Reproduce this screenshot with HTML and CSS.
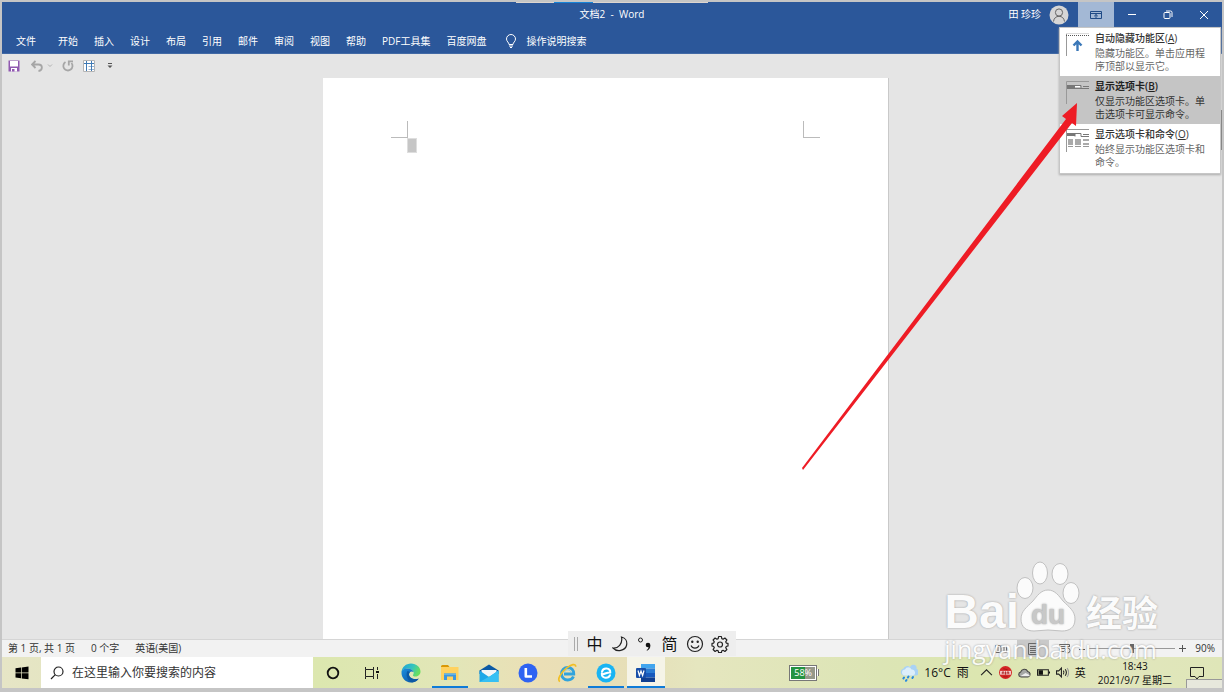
FILE: index.html
```html
<!DOCTYPE html>
<html lang="zh-CN">
<head>
    <meta charset="UTF-8">
    <meta name="viewport" content="width=device-width, initial-scale=1.0">
    <title>文档2 - Word</title>
    <link rel="stylesheet" href="styles.css">
</head>
<body>
    <div class="top-strip"></div>

    <header class="header">
        <div class="titlebar">
            <h1 class="doc-title">文档2&nbsp; -&nbsp; Word</h1>
            <div class="window-tools">
                <span class="user-name">田 珍珍</span>
                <svg class="avatar" viewBox="0 0 20 20">
                    <circle cx="10" cy="10" r="9.5" fill="#d6d6d6"/>
                    <circle cx="10" cy="7.5" r="3.6" fill="none" stroke="#666" stroke-width="1"/>
                    <path d="M4.5 16.5c.4-3.4 2.6-5.2 5.5-5.2s5.1 1.8 5.5 5.2" fill="none" stroke="#666" stroke-width="1"/>
                </svg>
                <button class="win-btn active" aria-label="功能区显示选项">
                    <svg width="12" height="10" viewBox="0 0 12 10" fill="none" stroke="#1f4a86">
                        <path d="M.5 1.5h11v7H.5zM.5 3.5h11M6 8V4.5M4.2 6.2L6 4.5l1.8 1.7"/>
                    </svg>
                </button>
                <button class="win-btn" aria-label="最小化">
                    <svg width="10" height="10" viewBox="0 0 10 10" stroke="#fff"><path d="M1 4.5h8"/></svg>
                </button>
                <button class="win-btn" aria-label="还原">
                    <svg width="10" height="10" viewBox="0 0 10 10" fill="none" stroke="#fff">
                        <rect x="1" y="2.5" width="6" height="6" rx="1"/>
                        <path d="M3 1h4.500q1.500 0 1.500 1.500V7"/>
                    </svg>
                </button>
                <button class="win-btn" aria-label="关闭">
                    <svg width="10" height="10" viewBox="0 0 10 10" stroke="#fff"><path d="M1 1l8 8M9 1L1 9"/></svg>
                </button>
            </div>
        </div>
        <nav class="tabs">
            <a class="file" href="#file">文件</a>
            <a href="#home">开始</a>
            <a href="#insert">插入</a>
            <a href="#design">设计</a>
            <a href="#layout">布局</a>
            <a href="#references">引用</a>
            <a href="#mailings">邮件</a>
            <a href="#review">审阅</a>
            <a href="#view">视图</a>
            <a href="#help">帮助</a>
            <a href="#pdf">PDF工具集</a>
            <a href="#netdisk">百度网盘</a>
            <label class="tell-me">
                <svg width="12" height="14" viewBox="0 0 12 14" fill="none" stroke="#fff">
                    <path d="M4 10.5C4 8.5 1.5 7.5 1.5 5a4.5 4.5 0 0 1 9 0c0 2.500-2.500 3.500-2.500 5.500zM4 12h4M5 13.500h2"/>
                </svg>
                <input type="text" placeholder="操作说明搜索" aria-label="操作说明搜索">
            </label>
        </nav>
    </header>

    <div class="quick-access">
        <button aria-label="保存">
            <svg width="12" height="12" viewBox="0 0 12 12">
                <path d="M.5.5h11v11H.5z" fill="#9059b0"/>
                <path d="M2 1h8v5.500H2z" fill="#fff"/>
                <path d="M3 8h6v3.500H3z" fill="#fff"/>
                <path d="M4 9h2.500v2.500H4z" fill="#9059b0"/>
            </svg>
        </button>
        <button class="undo" aria-label="撤消">
            <svg width="12" height="12" viewBox="0 0 12 12" fill="none" stroke="#a6a6a6" stroke-width="1.800">
                <path d="M4.500 1L1 4.500 4.500 8M1 4.500h6.500c4.500 0 4.500 6 0 6.500"/>
            </svg>
            <svg width="6" height="4" viewBox="0 0 6 4" fill="none" stroke="#b0b0b0"><path d="M1 .5l2 2 2-2"/></svg>
        </button>
        <button aria-label="重复">
            <svg width="12" height="12" viewBox="0 0 12 12" fill="none" stroke="#a6a6a6" stroke-width="1.800">
                <path d="M3.500 2A4.600 4.600 0 1 0 9.500 3M6.800 5.500V1.300H11"/>
            </svg>
        </button>
        <button aria-label="绘制表格">
            <svg width="12" height="12" viewBox="0 0 12 12" fill="none">
                <path d="M.5.5h11v11H.5z" fill="#fff" stroke="#b5b5b5"/>
                <path d="M5.500 6.500h6M5.500 9.500h6" stroke="#9ab4d0"/>
                <path d="M1 3.500h10M3.500 1v10M8.500 1v10" stroke="#3f7ab5"/>
            </svg>
        </button>
        <button aria-label="自定义快速访问工具栏">
            <svg width="6" height="6" viewBox="0 0 6 6"><path d="M1 0h4v1H1zM.5 2.500h5L3 5z" fill="#555"/></svg>
        </button>
    </div>

    <main class="workspace">
        <div class="page">
            <div class="crop-marks">
                <span class="mark mark-left"></span>
                <span class="mark mark-right"></span>
            </div>
            <div class="caret"></div>
        </div>
        <div class="scroll-thumb"></div>
    </main>

    <footer class="statusbar">
        <span>第 1 页, 共 1 页</span>
        <span>0 个字</span>
        <span>英语(美国)</span>
        <div class="views">
            <button aria-label="阅读视图">
                <svg width="12" height="10" viewBox="0 0 12 10" fill="none" stroke="#666"><path d="M6 1.500v8M.5 1.500h4L6 2.500l1.500-1h4v7h-4L6 9.500l-1.500-1h-4zM2 4h2M2 6h2M8 4h2M8 6h2"/></svg>
            </button>
            <button class="selected" aria-label="页面视图">
                <svg width="10" height="12" viewBox="0 0 10 12" fill="none" stroke="#666"><path d="M.5.500h9v11h-9zM2 3.500h6M2 5.500h6M2 7.500h6M2 9.500h6"/></svg>
            </button>
            <button aria-label="Web 版式视图">
                <svg width="12" height="11" viewBox="0 0 12 11" fill="none" stroke="#666"><path d="M5 8.500H.5v-7h10V4M.5 3.500h10M2 5.500h4"/><circle cx="8.500" cy="7.500" r="2.500"/></svg>
            </button>
        </div>
        <div class="zoom">
            <button aria-label="缩小"><svg width="6" height="6" viewBox="0 0 6 6" stroke="#555"><path d="M0 3.500h6"/></svg></button>
            <input type="range" min="10" max="170" value="90" aria-label="显示比例">
            <button aria-label="放大"><svg width="7" height="7" viewBox="0 0 7 7" stroke="#555"><path d="M0 3.500h7M3.500 0v7"/></svg></button>
            <span>90%</span>
        </div>
    </footer>

    <div class="taskbar">
        <button class="start" aria-label="开始菜单">
            <svg width="14" height="14" viewBox="0 0 14 14"><path d="M.5 2.300L6 1.500v5H.5zM6.700 1.400L13.500.5v6H6.700zM.5 7.300H6v5l-5.500-.8zM6.700 7.300h6.800v6l-6.800-.9z"/></svg>
        </button>
        <label class="search">
            <svg width="14" height="14" viewBox="0 0 14 14" fill="none" stroke="#222" stroke-width="1.200"><circle cx="8.500" cy="5.500" r="4.500"/><path d="M5.300 8.700L1 13"/></svg>
            <input type="text" placeholder="在这里输入你要搜索的内容" aria-label="搜索">
        </label>
        <div class="apps">
            <button aria-label="Cortana">
                <svg width="14" height="14" viewBox="0 0 14 14"><circle cx="7" cy="7" r="5.300" fill="none" stroke="#111" stroke-width="1.800"/></svg>
            </button>
            <button aria-label="任务视图">
                <svg width="14" height="14" viewBox="0 0 14 14" fill="none" stroke="#222"><path d="M.5 1v2.500h8V1M.5 13v-2.500h8V13M.5 3.500v7M8.500 3.500v7M12.500 1v3M12.500 8v5"/><path d="M11 5h3v2h-3z" fill="#111" stroke="none"/></svg>
            </button>
            <button aria-label="Microsoft Edge">
                <svg width="20" height="20" viewBox="0 0 20 20">
                    <defs>
                        <linearGradient id="edgeTop" x1="0" y1="0" x2="1" y2=".4"><stop offset="0" stop-color="#1ba0dc"/><stop offset=".6" stop-color="#35c4bd"/><stop offset="1" stop-color="#67df60"/></linearGradient>
                        <linearGradient id="edgeLow" x1="0" y1="0" x2="1" y2="1"><stop offset="0" stop-color="#1b8fe0"/><stop offset="1" stop-color="#0b4f9b"/></linearGradient>
                    </defs>
                    <path d="M.5 9C1 4 5 .5 10 .5c5.500 0 9.500 3.800 9.500 8 0 3.500-2.700 5-5 5-2 0-3-.8-2.500-1.600.7-1 .9-1.800.5-2.900-1-2.600-4-4-7-3.500C3.500 5.800 1.500 7 .5 9z" fill="url(#edgeTop)"/>
                    <path d="M.5 10C.5 7 3 5.300 6.500 5.500c3 .1 5.300 1.500 6 3.500-2-1.500-4.500 0-4.500 2.500 0 3.500 4 5.800 9.500 4.200-2 2.700-5 4-8 3.800C4.500 19.200.500 15 .500 10z" fill="url(#edgeLow)"/>
                    <path d="M6.500 8c-2 3-.6 9.500 4.500 11.400 3 0 5.500-1.700 6.800-3.900-5 1.700-9.500-.5-9.800-4 0-1 .3-1.800 1-2.400z" fill="#0c59a4"/>
                </svg>
            </button>
            <button class="running" aria-label="文件资源管理器">
                <svg width="20" height="18" viewBox="0 0 20 18">
                    <path d="M1 2.500Q1 1 2.500 1H8l1.500 2H1z" fill="#d99806"/>
                    <path d="M1 3h17.500v13H1z" fill="#ffd25f"/>
                    <path d="M4 16V9.500h12V16h-3v-3.500H7V16z" fill="#3f97dc"/>
                    <path d="M4 9.500h12v1.500H4z" fill="#62b3e8"/>
                </svg>
            </button>
            <button aria-label="邮件">
                <svg width="20" height="20" viewBox="0 0 20 20">
                    <path d="M.5 7.500L10 1.500l9.500 6V11H.5z" fill="#0c5aa5"/>
                    <path d="M2.500 7h15v6h-15z" fill="#f3f5f7"/>
                    <path d="M.5 7.500L10 14l9.500-6.500V19H.5z" fill="#1fa7e8"/>
                    <path d="M.5 19L11 13.300l8.500-5.800V19z" fill="#37c0f3"/>
                </svg>
            </button>
            <button aria-label="联想">
                <svg width="20" height="20" viewBox="0 0 20 20"><circle cx="10" cy="10" r="9.500" fill="#2f63f2"/><path d="M7.800 5v8.500H14" fill="none" stroke="#fff" stroke-width="2.600" stroke-linejoin="round"/></svg>
            </button>
            <button aria-label="Internet Explorer">
                <svg width="20" height="20" viewBox="0 0 20 20" fill="none">
                    <path d="M16.500 13.500c-1 2.200-3.200 3.500-5.700 3.500A6.200 6.200 0 0 1 4.500 10.700C4.500 7.300 7.200 4.500 10.700 4.500c3.600 0 6.200 2.500 6.100 6.500H7" stroke="#31a3dc" stroke-width="2.800"/>
                    <path d="M7.500 9.800c.3-4 6.200-4 6.500 0" stroke="#76c9ef"/>
                    <path d="M3 18.500C-.5 17 4 9.500 9.500 5.200 14 1.700 18.800-.2 18.700 3.800" stroke="#f2bf24" stroke-width="1.700"/>
                </svg>
            </button>
            <button class="running" aria-label="浏览器">
                <svg width="20" height="20" viewBox="0 0 20 20" fill="none" stroke="#fff" stroke-linecap="round"><circle cx="10" cy="10" r="9.500" fill="#19b4f3" stroke="none"/><path d="M14.300 9.600c.2-5-7.300-5.600-8.300-.8M5.800 10.600c-.2 4.800 6.500 5.600 8.200 1.600M6.500 11.200c3 0 4.500-2.200 7.600-1.700" stroke-width="2"/></svg>
            </button>
            <button class="running current" aria-label="Word">
                <svg width="20" height="18" viewBox="0 0 20 18">
                    <path d="M5 0h14v4.500H5z" fill="#41a5ee"/><path d="M5 4.500h14V9H5z" fill="#2b7cd3"/><path d="M5 9h14v4.500H5z" fill="#185abd"/><path d="M5 13.500h14V18H5z" fill="#103f91"/>
                    <rect y="4" width="10" height="10" rx="1" fill="#174ea8"/>
                    <path d="M2 6.500l1.400 5L5 7l1.600 4.500 1.400-5" fill="none" stroke="#fff" stroke-width="1.200"/>
                </svg>
            </button>
        </div>
        <div class="battery-slot"><div class="battery">58%</div><span class="battery-tip"></span></div>
        <div class="weather">
            <svg width="18" height="18" viewBox="0 0 18 18">
                <path d="M4 11.500a3.500 3.500 0 0 1-.5-6.900A4 4 0 0 1 10 3.200 3 3 0 0 1 16.500 5a3.300 3.300 0 0 1-1 6.500z" fill="#a9d2f5"/>
                <path d="M5 11.500a3 3 0 0 1 0-6 3.500 3.500 0 0 1 6.500 0 3 3 0 0 1 1 6z" fill="#dceefa"/>
                <path d="M4 13.500l-.6 1M8.500 12.500l-.6 1M13 13l-.6 1M6.500 16l-.5.800" stroke="#2589df" stroke-width="2" stroke-linecap="round"/>
            </svg>
            <span>16°C</span>
            <span>雨</span>
        </div>
        <div class="tray">
            <svg viewBox="0 0 12 12" fill="none" stroke="#222"><path d="M1 8.500l5-5 5 5"/></svg>
            <svg viewBox="0 0 12 12"><circle cx="6" cy="6" r="6" fill="#d42525"/><path d="M1 4.500h10v3.500H1z" fill="#f6d5d5"/><path d="M3 7.500v-2h1.500v2M6 5v3M7.500 7.500v-2H9v2M4 2.500l4 1M4 10h4" fill="none" stroke="#a51414" stroke-width=".8"/></svg>
            <svg viewBox="0 0 12 12"><path d="M2.500 10a2.300 2.300 0 0 1 0-4.500A3.500 3.500 0 0 1 9 5a2.600 2.600 0 0 1 .5 5z" fill="#a5a7a5" stroke="#444"/><path d="M2 9.500l5-3 4 2-1 1z" fill="#eee"/></svg>
            <svg viewBox="0 0 12 12"><path d="M.5 3.500h10v5H.5z" fill="none" stroke="#222"/><path d="M1.500 4h4v4h-4zM11 5h1v2h-1z" fill="#111"/></svg>
            <svg viewBox="0 0 12 12" fill="none" stroke="#222"><path d="M.5 4.500h2L5 2v8L2.500 7.500h-2zM6.800 4.300q1.200 1.700 0 3.400M8.500 3q2.200 3 0 6"/><path d="M10.200 1.800q3 4.200 0 8.400" stroke="#999"/></svg>
            <span>英</span>
        </div>
        <div class="clock">
            <time>18:43</time>
            <time>2021/9/7 星期二</time>
        </div>
        <button class="notify" aria-label="通知">
            <svg width="14" height="14" viewBox="0 0 14 14" fill="none" stroke="#222"><path d="M.5 1.500h13v9H9L7 13l-2-2.500H.5z"/></svg>
        </button>
        <div class="peek"></div>
    </div>

    <!-- ribbon display options -->
    <div class="ribbon-menu" role="menu">
        <button role="menuitem">
            <svg width="25" height="26" viewBox="0 0 25 26" fill="none">
                <path d="M1.500 25V3" stroke="#999"/><path d="M1 4.500h23" stroke="#555" stroke-dasharray="1 1"/>
                <path d="M1 2.500h23" stroke="#ddd"/>
                <path d="M12.500 20V11M8.500 14.500l4-4 4 4" stroke="#3b78b8" stroke-width="2.400"/>
            </svg>
            <span class="menu-text"><b>自动隐藏功能区(<u>A</u>)</b>隐藏功能区。单击应用程序顶部以显示它。</span>
        </button>
        <button class="selected" role="menuitem">
            <svg width="25" height="26" viewBox="0 0 25 26" fill="none">
                <path d="M1.500 25V2.500H24" stroke="#999"/>
                <path d="M2 6h8v4H2z" fill="#777"/><path d="M10 6.500h6V9M18 7.500h6M10 9.500h14" stroke="#777"/><path d="M10 7.500h5" stroke="#fff"/>
            </svg>
            <span class="menu-text"><b>显示选项卡(<u>B</u>)</b>仅显示功能区选项卡。单击选项卡可显示命令。</span>
        </button>
        <button role="menuitem">
            <svg width="25" height="26" viewBox="0 0 25 26" fill="none">
                <path d="M1.500 25V2.500H24" stroke="#999"/>
                <path d="M2 6h8v3H2z" fill="#777"/><path d="M10 9.500V6.500h6v3h8M18 7.500h6" stroke="#777"/>
                <path d="M3 12h5v6H3zM10 12h6v6h-6zM18 12h6v2h-6zM18 16h6v2h-6z" fill="#aaa"/><path d="M3 19.500h5M10 19.500h6M18 19.500h6" stroke="#999"/>
            </svg>
            <span class="menu-text"><b>显示选项卡和命令(<u>O</u>)</b>始终显示功能区选项卡和命令。</span>
        </button>
    </div>

    <!-- input method bar -->
    <div class="ime">
        <span class="grip"></span>
        <button>中</button>
        <button aria-label="半角">
            <svg width="16" height="16" viewBox="0 0 16 16" fill="none" stroke="#222" stroke-width="1.200"><path d="M9.500 1c4 1 6 4.500 5 8.500-1.300 5-9.500 7-13.500 2.500C6 12.500 11 8 9.500 1z"/></svg>
        </button>
        <button aria-label="中文标点">
            <svg width="16" height="16" viewBox="0 0 16 16"><circle cx="3.500" cy="4" r="2" fill="none" stroke="#222"/><circle cx="11" cy="9" r="2.300" fill="#111"/><path d="M13.300 9c.3 3-1 4.700-3.300 5.700l-.4-.8c1.300-.8 1.900-1.700 1.900-3z" fill="#111"/></svg>
        </button>
        <button>简</button>
        <button aria-label="表情">
            <svg width="18" height="18" viewBox="0 0 18 18" fill="none" stroke="#222" stroke-width="1.200"><circle cx="9" cy="9" r="7.500"/><path d="M5 10.500c1.500 3.500 6.500 3.500 8 0"/><circle cx="6.300" cy="6.800" r=".6" fill="#222"/><circle cx="11.700" cy="6.800" r=".6" fill="#222"/></svg>
        </button>
        <button aria-label="设置">
            <svg width="18" height="18" viewBox="0 0 18 18" fill="none" stroke="#222" stroke-width="1.200" stroke-linejoin="round">
                <path d="M7.600 1.500h2.800l.4 2.100 1.300.6 1.800-1.200 2 2-1.200 1.800.6 1.300 1.700.3v2.600l-1.700.4-.6 1.300 1.200 1.800-2 2-1.800-1.200-1.300.6-.4 1.700H7.600l-.4-1.700-1.300-.6-1.800 1.200-2-2 1.200-1.800-.6-1.300-1.700-.4V8.400l1.700-.3.600-1.300L2.100 5l2-2 1.800 1.200 1.300-.6z"/>
                <circle cx="9" cy="9.500" r="2.500"/>
            </svg>
        </button>
    </div>

    <svg class="arrow" width="280" height="370" viewBox="0 0 280 370">
        <path d="M277 2L262 15l4 3L2 367l1 2L272 22l4 3z" fill="#ee1c25"/>
    </svg>

    <div class="watermark">
        <div class="logo">
            <span class="logo-latin">Bai</span>
            <svg width="66" height="74" viewBox="0 0 66 74">
                <g fill="#fff" stroke="#bbb">
                    <ellipse cx="10" cy="28" rx="8" ry="10.500"/>
                    <ellipse cx="25" cy="13" rx="7.500" ry="11"/>
                    <ellipse cx="45" cy="14" rx="8" ry="10.500"/>
                    <ellipse cx="56" cy="33" rx="8" ry="10.500"/>
                    <path d="M33 30c7 0 11 6 15 11 6 6 12 10 12 18 0 9-6 12-13 12-5 0-9-1-14-1s-9 1-14 1C11 71 6 67 6 59c0-8 6-12 12-18 4-5 8-11 15-11z"/>
                </g>
                <text class="logo-du" x="16" y="64">du</text>
            </svg>
            <span class="logo-cjk">经验</span>
        </div>
        <div class="site">jingyan.baidu.com</div>
    </div>
</body>
</html>
```
FILE: styles.css
```css
* {
    box-sizing: border-box;
}
body {
    margin: 0;
    min-height: 100vh;
    display: flex;
    flex-direction: column;
    position: relative;
    overflow: hidden;
    border: 2px solid #c5c5c5;
    border-bottom-width: 4px;
    background: #e5e5e5;
    font-family: "Open Sans", "Noto Sans CJK SC", sans-serif;
    font-size: 10px;
    line-height: 13px;
    color: #333;
}
button,
input {
    font: inherit;
    color: inherit;
    border: 0;
    padding: 0;
    background: none;
    outline: none;
}
button {
    display: flex;
    align-items: center;
    justify-content: center;
}
svg {
    display: block;
    flex: none;
}

/* header */
.top-strip {
    position: absolute;
    top: 0;
    left: 514px;
    width: 192px;
    height: 1px;
    background: linear-gradient(90deg, #ddd5cf 20%, #1683d8 20%, #1683d8 40%, #ddd5cf 40%);
}
.header {
    background: #2b579a;
    border-bottom: 1px solid #4169a5;
    color: #fff;
}
.titlebar {
    display: grid;
    grid-template-columns: 1fr auto 1fr;
    height: 25px;
}
.doc-title {
    grid-column: 2;
    margin: 0;
    font-size: 10px;
    font-weight: 400;
    line-height: 25px;
}
.window-tools {
    display: flex;
    align-items: center;
    justify-content: flex-end;
}
.avatar {
    width: 20px;
    height: 20px;
    margin: 0 9px 0 8px;
}
.win-btn {
    width: 36px;
    height: 100%;
}
.win-btn.active {
    background: #a3b8d5;
}
.tabs {
    display: flex;
    align-items: center;
    height: 26px;
    padding: 2px 0 0 6px;
}
.tabs a {
    padding: 0 8px;
    color: #fff;
    text-decoration: none;
    white-space: nowrap;
}
.tabs .file {
    margin-right: 6px;
}
.tell-me {
    display: flex;
    align-items: center;
    gap: 9px;
    padding-left: 11px;
}
.tell-me input {
    width: 80px;
}
.tell-me input::placeholder {
    color: #fff;
}

/* quick access toolbar */
.quick-access {
    display: flex;
    align-items: center;
    gap: 9px;
    height: 24px;
    padding-left: 6px;
}
.quick-access .undo {
    gap: 4px;
    padding-left: 2px;
}
.quick-access button {
    min-width: 12px;
}

/* document */
.workspace {
    flex: 1;
    display: flex;
    justify-content: center;
    position: relative;
    padding-right: 12px;
}
.page {
    width: 100%;
    max-width: 566px;
    padding: 43px 68px 0;
    background: #fff;
    border-right: 1px solid #c9c9c9;
}
.crop-marks {
    display: flex;
    justify-content: space-between;
}
.mark {
    width: 17px;
    height: 17px;
    border-bottom: 1px solid #bbb;
}
.mark-left {
    border-right: 1px solid #bbb;
}
.mark-right {
    border-left: 1px solid #bbb;
}
.caret {
    width: 10px;
    height: 15px;
    margin-left: 16px;
    background: #c6c6c6;
    border: 1px solid #dedede;
}
.scroll-thumb {
    position: absolute;
    top: 32px;
    right: 0;
    width: 3px;
    height: 40px;
    border: 1px solid #777;
    border-left: 0;
}

/* status bar */
.statusbar {
    display: flex;
    align-items: center;
    gap: 16px;
    height: 18px;
    padding: 0 7px 0 6px;
    background: #f2f2f2;
    border-top: 1px solid #d5d5d5;
}
.views {
    display: flex;
    height: 100%;
    margin-left: auto;
}
.views button {
    width: 32px;
}
.views .selected {
    background: #c9c9c9;
}
.zoom {
    display: flex;
    align-items: center;
    gap: 4px;
    margin-left: -18px;
}
.zoom span {
    margin-left: 5px;
}
.zoom input {
    width: 86px;
    height: 12px;
    margin: 0;
    appearance: none;
    background: linear-gradient(#999, #999) center / 100% 1px no-repeat;
}
.zoom input::-webkit-slider-thumb {
    appearance: none;
    width: 4px;
    height: 9px;
    background: #666;
}

/* taskbar */
.taskbar {
    display: flex;
    position: relative;
    height: 31px;
    color: #111;
    background: linear-gradient(90deg, #e6e5c6, #dce7af 26%, #e2e6b8 37%, #ebdfb6 44%, #e6dfb8 52%, #e5e6bf 57%, #dce5b5 72%, #dce6b0 80%, #e1e6bd 90%, #dfe6b8);
}
.start {
    width: 39px;
}
.search {
    display: flex;
    align-items: center;
    gap: 8px;
    width: 272px;
    padding-left: 9px;
    background: #fff;
}
.search input {
    flex: 1;
    min-width: 0;
    font-size: 12px;
}
.search input::placeholder {
    color: #333;
}
.apps {
    display: flex;
    gap: 3px;
    padding-left: 2px;
}
.apps button {
    width: 36px;
    border-bottom: 2px solid transparent;
    padding-top: 2px;
}
.apps .running {
    border-bottom-color: #0e7bd8;
}
.apps .current {
    width: 38px;
    background: #f5f4e8;
}
.battery-slot {
    flex: 1;
    display: flex;
    align-items: center;
    justify-content: center;
    padding-left: 44px;
}
.battery {
    width: 26px;
    height: 14px;
    border: 1px solid #fff;
    outline: 1px solid #777;
    background: linear-gradient(90deg, #239342 58%, #96988a 58%);
    color: #fff;
    font-size: 9px;
    line-height: 12px;
    text-align: center;
}
.battery-tip {
    width: 2px;
    height: 7px;
    margin-left: 1px;
    background: #fff;
    border-right: 1px solid #777;
}
.weather {
    display: flex;
    align-items: center;
    gap: 6px;
    font-size: 12px;
}
.tray {
    display: flex;
    align-items: center;
    gap: 6px;
    margin-left: 11px;
    font-size: 11px;
}
.tray svg {
    width: 13px;
    height: 13px;
}
.clock {
    display: flex;
    flex-direction: column;
    justify-content: center;
    margin-left: 12px;
    text-align: center;
    line-height: 14px;
}
.notify {
    width: 50px;
}
.peek {
    position: absolute;
    right: 0;
    bottom: 0;
    width: 36px;
    height: 9px;
    background: #e7e8dc;
    border: 1px solid #999;
    border-width: 1px 0 0 1px;
}

/* ribbon display menu */
.ribbon-menu {
    position: absolute;
    top: 25px;
    right: 1px;
    width: 162px;
    padding-bottom: 1px;
    background: #fff;
    border: 1px solid #c6c6c6;
    box-shadow: 0 1px 2px #aaa;
}
.ribbon-menu button {
    display: flex;
    align-items: flex-start;
    justify-content: flex-start;
    gap: 5px;
    width: 100%;
    padding: 3px 12px 3px 5px;
    text-align: left;
    color: #666;
}
.ribbon-menu b {
    display: block;
    margin-bottom: 2px;
    font-weight: 500;
    line-height: 14px;
    color: #333;
}
.ribbon-menu .selected {
    background: #c5c5c5;
    color: #333;
}
.ribbon-menu .selected b {
    font-weight: 600;
    color: #222;
}

/* input method bar */
.ime {
    position: absolute;
    left: 566px;
    bottom: 32px;
    display: flex;
    align-items: center;
    gap: 8px;
    height: 25px;
    padding: 0 8px 0 6px;
    background: #eee;
    color: #111;
    font-size: 16px;
    line-height: 20px;
}
.ime button {
    width: 17px;
}
.ime .grip {
    width: 4px;
    height: 14px;
    border: 1px solid #aaa;
    border-width: 0 1px;
}

.arrow {
    position: absolute;
    top: 99px;
    right: 142px;
    pointer-events: none;
}

/* watermark */
.watermark {
    position: absolute;
    right: 64px;
    bottom: 24px;
    color: #fff;
    opacity: .85;
    text-shadow: 0 0 2px #888;
    pointer-events: none;
}
.logo {
    display: flex;
    align-items: flex-end;
}
.logo-latin {
    margin-right: -4px;
    font: bold 48px/44px "Liberation Sans", sans-serif;
}
.logo-du {
    font: bold 28px "Liberation Sans", sans-serif;
    fill: #c4c4c4;
}
.logo-cjk {
    margin-left: 5px;
    font-size: 36px;
    font-weight: 700;
    line-height: 40px;
}
.site {
    font-size: 25px;
    line-height: 30px;
}
```
